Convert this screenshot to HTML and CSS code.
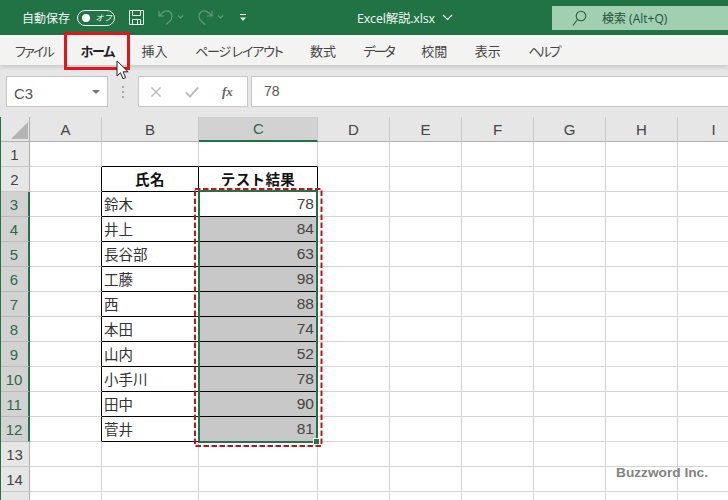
FILE: index.html
```html
<!DOCTYPE html>
<html lang="ja">
<head>
<meta charset="utf-8">
<title>Excel解説.xlsx</title>
<link rel="stylesheet" href="styles.css">
</head>
<body>
<div class="app">
  <header class="titlebar">
    <span class="autosave">自動保存</span>
    <span class="toggle"><i class="knob"></i><span class="toggle-text">オフ</span></span>
    <svg class="ic-save" width="17" height="17" viewBox="0 0 17 17" fill="none" stroke="#e8f2ec" stroke-width="1"><path d="M1.500 1.500h14v14h-14zM4.500 1.500v5h8v-5M4.500 15.500v-5h8v5M9.500 11v4"/></svg>
    <svg class="ic-undo" width="28" height="17" viewBox="0 0 28 17" fill="none" stroke="#5f9c7d" stroke-width="1.200"><path d="M2 2v5h5M2.500 7C5 2.500 10 0.500 13 3c3 2.500 2.500 7-.5 9.500L9 15.500"/><path d="M21 6.500l2.500 2.500 2.500-2.500"/></svg>
    <svg class="ic-redo" width="28" height="17" viewBox="0 0 28 17" fill="none" stroke="#5f9c7d" stroke-width="1.200"><path d="M15 2v5h-5M14.500 7C12 2.500 7 .5 4 3c-3 2.500-2.500 7 .5 9.500L8 15.500"/><path d="M21 6.500l2.500 2.500 2.500-2.500"/></svg>
    <svg class="ic-more" width="8" height="9" viewBox="0 0 8 9" fill="none" stroke="#f2f7f4"><path d="M1 1.500h6" /><path d="M1 4.500h6l-3 3.500z" fill="#f2f7f4" stroke="none"/></svg>
    <span class="doc">Excel解説.xlsx</span>
    <svg class="ic-chev" width="11" height="7" viewBox="0 0 11 7" fill="none" stroke="#f2f7f4" stroke-width="1.100"><path d="M1 1l4.500 4.500L10 1"/></svg>
    <div class="search">
      <svg width="15" height="17" viewBox="0 0 15 17" fill="none" stroke="#2c5a42" stroke-width="1.100"><circle cx="9" cy="6" r="4.800"/><path d="M5.500 9.500L1 15.500"/></svg>
      <span class="search-text">検索 (Alt+Q)</span>
    </div>
  </header>

  <nav class="tabs">
    <span class="k1">ファイル</span><span class="tab-home k2">ホーム</span><span>挿入</span><span class="k2">ページ レイアウト</span><span>数式</span><span class="k3">データ</span><span>校閲</span><span>表示</span><span class="k3">ヘルプ</span>
    <i class="tab-mark"></i>
    <svg class="cursor" width="13" height="20" viewBox="0 0 13 20"><path d="M1 1v15l3.500-3.300 2.500 6 2.700-1.100-2.600-5.800h5z" fill="#fff" stroke="#222" stroke-width="1"/></svg>
  </nav>

  <div class="formula">
    <div class="namebox"><span>C3</span><i class="caret"></i></div>
    <div class="grip"><i></i><i></i><i></i></div>
    <div class="fbtns">
      <svg width="12" height="12" viewBox="0 0 12 12" fill="none" stroke="#bdbdbd" stroke-width="1.500"><path d="M1.500 1.500l9 9M10.500 1.500l-9 9"/></svg>
      <svg width="14" height="12" viewBox="0 0 14 12" fill="none" stroke="#bdbdbd" stroke-width="2"><path d="M1 6.500l4 4L13 1.500"/></svg>
      <span class="fx">fx</span>
    </div>
    <div class="finput">78</div>
  </div>

  <main class="sheet">
    <div class="ch corner"><svg width="17" height="17" viewBox="0 0 17 17"><path d="M17 0v17H0z" fill="#b4b4b4"/></svg></div>
    <div class="ch">A</div><div class="ch">B</div><div class="ch sel">C</div><div class="ch">D</div><div class="ch">E</div><div class="ch">F</div><div class="ch">G</div><div class="ch">H</div><div class="ch">I</div>

    <div class="rh">1</div><div class="c"></div><div class="c tb-b"></div><div class="c tb-b"></div><div class="c"></div><div class="c"></div><div class="c"></div><div class="c"></div><div class="c"></div><div class="c"></div>
    <div class="rh">2</div><div class="c tb-r"></div><div class="c t hd">氏名</div><div class="c t hd">テスト結果</div><div class="c"></div><div class="c"></div><div class="c"></div><div class="c"></div><div class="c"></div><div class="c"></div>
    <div class="rh on">3</div><div class="c tb-r"></div><div class="c t">鈴木</div><div class="c t n">78</div><div class="c"></div><div class="c"></div><div class="c"></div><div class="c"></div><div class="c"></div><div class="c"></div>
    <div class="rh on">4</div><div class="c tb-r"></div><div class="c t">井上</div><div class="c t n g">84</div><div class="c"></div><div class="c"></div><div class="c"></div><div class="c"></div><div class="c"></div><div class="c"></div>
    <div class="rh on">5</div><div class="c tb-r"></div><div class="c t">長谷部</div><div class="c t n g">63</div><div class="c"></div><div class="c"></div><div class="c"></div><div class="c"></div><div class="c"></div><div class="c"></div>
    <div class="rh on">6</div><div class="c tb-r"></div><div class="c t">工藤</div><div class="c t n g">98</div><div class="c"></div><div class="c"></div><div class="c"></div><div class="c"></div><div class="c"></div><div class="c"></div>
    <div class="rh on">7</div><div class="c tb-r"></div><div class="c t">西</div><div class="c t n g">88</div><div class="c"></div><div class="c"></div><div class="c"></div><div class="c"></div><div class="c"></div><div class="c"></div>
    <div class="rh on">8</div><div class="c tb-r"></div><div class="c t">本田</div><div class="c t n g">74</div><div class="c"></div><div class="c"></div><div class="c"></div><div class="c"></div><div class="c"></div><div class="c"></div>
    <div class="rh on">9</div><div class="c tb-r"></div><div class="c t">山内</div><div class="c t n g">52</div><div class="c"></div><div class="c"></div><div class="c"></div><div class="c"></div><div class="c"></div><div class="c"></div>
    <div class="rh on">10</div><div class="c tb-r"></div><div class="c t">小手川</div><div class="c t n g">78</div><div class="c"></div><div class="c"></div><div class="c"></div><div class="c"></div><div class="c"></div><div class="c"></div>
    <div class="rh on">11</div><div class="c tb-r"></div><div class="c t">田中</div><div class="c t n g">90</div><div class="c"></div><div class="c"></div><div class="c"></div><div class="c"></div><div class="c"></div><div class="c"></div>
    <div class="rh on">12</div><div class="c tb-r"></div><div class="c t">菅井</div><div class="c t n g">81</div><div class="c"></div><div class="c"></div><div class="c"></div><div class="c"></div><div class="c"></div><div class="c"></div>
    <div class="rh">13</div><div class="c"></div><div class="c"></div><div class="c"></div><div class="c"></div><div class="c"></div><div class="c"></div><div class="c"></div><div class="c"></div><div class="c"></div>
    <div class="rh">14</div><div class="c"></div><div class="c"></div><div class="c"></div><div class="c"></div><div class="c"></div><div class="c"></div><div class="c"></div><div class="c"></div><div class="c"></div>
    <div class="rh">15</div><div class="c"></div><div class="c"></div><div class="c"></div><div class="c"></div><div class="c"></div><div class="c"></div><div class="c"></div><div class="c"></div><div class="c"></div>

    <div class="selection"><i class="handle"></i></div>
    <svg class="dash" width="129" height="259" viewBox="0 0 129 259" fill="none"><rect x="1" y="1" width="126.500" height="257" stroke="#c5121c" stroke-width="2" stroke-dasharray="5.500 2.500"/></svg>
    <div class="mark">Buzzword Inc.</div>
  </main>
</div>
</body>
</html>
```
FILE: styles.css
```css
* { box-sizing: border-box; }
html, body { margin: 0; padding: 0; }
body {
  width: 728px;
  height: 500px;
  overflow: hidden;
  font-family: "Noto Sans CJK JP", "Noto Sans", sans-serif;
  background: #fff;
}
.app { display: flex; flex-direction: column; height: 500px; overflow: hidden; }

/* title bar */
.titlebar {
  height: 35px;
  flex: none;
  background: #217346;
  color: #f2f7f4;
  display: flex;
  align-items: center;
  padding-left: 22px;
  font-size: 12px;
}
.autosave { width: 48px; white-space: nowrap; }
.toggle {
  margin-left: 7px;
  width: 38px;
  height: 16px;
  border: 1px solid #f2f7f4;
  border-radius: 8px;
  display: flex;
  align-items: center;
  padding-left: 4px;
  flex: none;
}
.knob { width: 8px; height: 8px; border-radius: 50%; background: #fff; flex: none; }
.toggle-text { margin-left: 5px; font-size: 8.500px; line-height: 1; font-style: italic; white-space: nowrap; flex: none; }
.ic-save { margin-left: 13px; }
.ic-undo { margin-left: 12px; }
.ic-redo { margin-left: 12px; }
.ic-more { margin-left: 14px; }
.doc { margin-left: 110px; width: 81px; white-space: nowrap; font-family: "Open Sans", "Noto Sans CJK JP", sans-serif; font-size: 12.500px; letter-spacing: -.2px; }
.ic-chev { margin-left: 4px; }
.search {
  margin-left: auto;
  width: 176px;
  height: 24px;
  margin-top: 1px;
  background: #a0cfb1;
  color: #1f5238;
  display: flex;
  align-items: center;
  padding-left: 20px;
}
.search-text { margin-left: 15px; font-family: "Open Sans", "Noto Sans CJK JP", sans-serif; font-size: 12px; }

/* ribbon tabs */
.tabs {
  height: 30px;
  flex: none;
  position: relative;
  z-index: 1;
  background: #f3f3f2;
  display: flex;
  align-items: center;
  gap: 27.500px;
  padding: 0 0 0 15px;
  font-size: 13px;
  color: #444;
  font-feature-settings: "palt";
  box-shadow: 0 2px 4px rgba(0, 0, 0, .14);
  white-space: nowrap;
}
.k1 { letter-spacing: -1.750px; }
.k2 { letter-spacing: -1.200px; }
.k3 { letter-spacing: -2px; }
.tab-home { font-weight: 700; color: #222; }
.tab-mark {
  position: absolute;
  left: 64px;
  top: -3px;
  width: 66px;
  height: 38px;
  border: 3px solid #e0161c;
}
.cursor { position: absolute; left: 116px; top: 25px; }

/* formula bar */
.formula {
  height: 52px;
  flex: none;
  background: #e6e6e6;
  display: flex;
  align-items: flex-start;
  padding: 11px 0 0 6px;
  color: #555;
}
.namebox, .fbtns, .finput {
  height: 31px;
  background: #fff;
  border: 1px solid #c6c6c6;
}
.namebox {
  width: 102px;
  display: flex;
  align-items: center;
  justify-content: space-between;
  padding: 3px 7px 0 7px;
  font: 15px "Liberation Sans", sans-serif;
}
.caret { width: 0; height: 0; border: 4px solid transparent; border-top: 4px solid #777; border-bottom: 0; margin-left: auto; margin-top: -3px; }
.grip { width: 30px; display: flex; flex-direction: column; align-items: center; gap: 3px; padding-top: 10px; }
.grip i { width: 2px; height: 2px; background: #a8a8a8; }
.fbtns {
  width: 110px;
  display: flex;
  align-items: center;
  padding-left: 11px;
  gap: 23px;
}
.fx { font: italic 700 13px "Liberation Serif", serif; color: #666; }
.finput {
  flex: 1;
  margin-left: 3px;
  border-right: 0;
  padding: 0 0 0 12px;
  font: 14px/28px "Liberation Sans", sans-serif;
}

/* sheet */
.sheet {
  flex: none;
  position: relative;
  display: grid;
  grid-template-columns: 29px 72px 97px 119px repeat(6, 72px);
  grid-template-rows: 25px repeat(15, 25px);
  border-left: 1px solid #217346;
  background: #fff;
  margin-right: -60px;
}
.sheet > * { min-width: 0; }
.ch, .rh {
  background: #e6e6e6;
  color: #444;
  font: 15px "Liberation Sans", sans-serif;
  display: flex;
  align-items: center;
  justify-content: center;
}
.ch { border-right: 1px solid #c8c8c8; border-bottom: 1px solid #b0b0b0; }
.corner { align-items: flex-end; justify-content: flex-end; padding: 0 1px 2px 0; border-right-color: #b0b0b0; }
.rh { border-right: 1px solid #ababab; border-bottom: 1px solid #c8c8c8; padding-right: 1px; }
.rh.on { background: #d2d2d2; color: #2c6a4a; border-right: 2px solid #217346; border-bottom-color: #b9b9b9; }
.ch.sel { background: #d2d2d2; color: #2c6a4a; border-bottom: 2px solid #217346; padding-left: 1px; }
.c {
  border-right: 1px solid #d4d4d4;
  border-bottom: 1px solid #d4d4d4;
  font-size: 14.500px;
  color: #333;
  padding: 0 2px;
  line-height: 23px;
  white-space: nowrap;
  overflow: hidden;
}
.tb-b { border-bottom-color: #000; }
.tb-r { border-right-color: #000; }
.t { border-right-color: #000; border-bottom-color: #000; }
.hd { font-weight: 700; text-align: center; color: #111; letter-spacing: .4px; }
.n { text-align: right; font-family: "Liberation Sans", sans-serif; font-size: 15.500px; color: #444; padding-right: 3px; }
.g { background: #c8c8c8; }

.selection {
  position: absolute;
  grid-column: 4 / 5;
  grid-row: 4 / 14;
  inset: -2px 0 -1px -1px;
  border: 2px solid #217346;
}
.handle {
  position: absolute;
  right: -3px;
  bottom: -3px;
  width: 6px;
  height: 6px;
  background: #217346;
  border: 1px solid #fff;
  border-width: 1px 0 0 1px;
}
.dash {
  position: absolute;
  grid-column: 4 / 5;
  grid-row: 4 / 14;
  left: -5px;
  top: -4px;
}
.mark {
  position: absolute;
  grid-column: 8 / 11;
  grid-row: 15 / 16;
  left: 82px;
  top: -5px;
  color: #7d7d7d;
  font: 700 13.700px/21px "Liberation Sans", sans-serif;
  white-space: nowrap;
  opacity: .95;
}
```
